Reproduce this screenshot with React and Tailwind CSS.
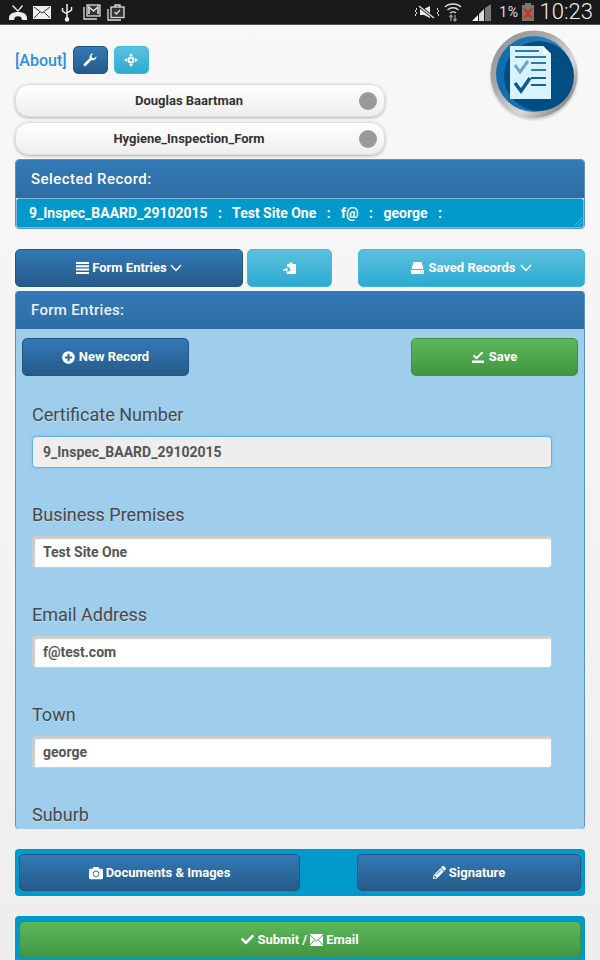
import { FaCamera, FaCheck, FaPencilAlt, FaPlusCircle } from 'react-icons/fa';

const blue = 'bg-gradient-to-b from-[#337ab7] to-[#265a88] border border-[#245580]';
const sky = 'bg-gradient-to-b from-[#5bc0de] to-[#2aabd2] border border-[#46b8da]';
const green = 'bg-gradient-to-b from-[#5cb85c] to-[#419641] border border-[#3e8f3e]';

function StatusBar() {
  return (
    <div className="h-[25px] bg-[#1a1a1a] border-b border-b-[#555] flex items-center justify-between pl-[8px] pr-[7px] shrink-0">
      <div className="flex items-center gap-[5px]">
        <svg width="20" height="18" viewBox="0 0 20 18" fill="#eee">
          <path d="M1 15c0-4 4-6 9-6s9 2 9 6v2h-5l-1-3c-2-1-4-1-6 0l-1 3H1z" />
          <path d="M5 2l5 5 4-5 1 1-5 6-6-6z" />
        </svg>
        <svg width="18" height="13" viewBox="0 0 18 13">
          <rect width="18" height="13" fill="#eee" />
          <path d="M1 1l8 6 8-6M1 12l6-6M17 12l-6-6" stroke="#333" fill="none" />
        </svg>
        <svg className="ml-[5px]" width="12" height="19" viewBox="0 0 12 19" fill="none" stroke="#eee" strokeWidth="1.5">
          <path d="M6 1v16M1.5 5v3l4.500 3M10.500 4v3l-4.500 3" />
          <circle cx="6" cy="16.500" r="1.500" fill="#eee" />
        </svg>
        <svg className="ml-[5px]" width="18" height="16" viewBox="0 0 18 16" fill="none" stroke="#ddd" strokeWidth="1.300">
          <path d="M1 3v12h13" />
          <rect x="4" y="1" width="13" height="11" fill="#333" />
          <path d="M6 10V3l4.500 4L15 3v7" strokeWidth="1.600" />
        </svg>
        <svg className="ml-[1px]" width="18" height="17" viewBox="0 0 18 17" fill="none" stroke="#ddd" strokeWidth="1.300">
          <path d="M1 5v11h13" />
          <rect x="4" y="3" width="13" height="10.500" fill="#333" />
          <path d="M8 3V1h5v2M7.500 8l2 2 3.500-4" />
        </svg>
      </div>
      <div className="flex items-center">
        <svg width="24" height="14" viewBox="0 0 24 14" fill="none" stroke="#ddd">
          <path d="M1 3q2 1 0 2t0 2 0 2 0 2M23 3q-2 1 0 2t0 2 0 2 0 2" />
          <path d="M5 4h4l6-3v12l-6-3H5z" fill="#eee" stroke="none" />
          <path d="M4 1l15 12" stroke="#1a1a1a" strokeWidth="3" />
          <path d="M4 1l15 12" strokeWidth="1.500" />
        </svg>
        <svg className="ml-[5px]" width="18" height="20" viewBox="0 0 18 20" fill="none" stroke="#ddd" strokeWidth="1.300">
          <path d="M1 5c4-4 12-4 16 0M3.500 8c3-3 8-3 11 0M6 11c2-1.500 4-1.500 6 0" />
          <path d="M7 13v6M5.500 15l1.500-2 1.500 2M11 19v-6M9.500 17l1.500 2 1.500-2" stroke="#999" />
        </svg>
        <svg className="ml-[10px]" width="20" height="17" viewBox="0 0 20 17">
          <path d="M0 17l6-6v6z" fill="#fff" />
          <path d="M7 10l5-5v12H7z" fill="#ddd" />
          <path d="M13 4l6-4v17h-6z" fill="#777" />
        </svg>
        <span className="ml-[7px] text-[14px] text-[#ddd] leading-none tracking-[0.6px]">1%</span>
        <svg className="ml-[3px] mt-[-1px]" width="12" height="18" viewBox="0 0 12 18">
          <path d="M3 0h6v2h3v16H0V2h3z" fill="#777" />
          <path d="M2.500 6l7 9M9.500 6l-7 9" stroke="#e02a10" strokeWidth="2.400" />
        </svg>
        <span className="ml-[6px] text-[22px] text-[#eee] font-light leading-none">10:23</span>
      </div>
    </div>
  );
}

function Toggle({ label }) {
  return (
    <div className="w-[370px] h-[33px] rounded-[14px] border border-[#ddd] bg-gradient-to-b from-white to-[#eee] shadow-[0_1px_3px_rgba(0,0,0,0.3)] flex items-center pr-[22px] relative">
      <span className="flex-1 text-center text-[13px] font-bold text-[#333]">{label}</span>
      <span className="absolute right-[7px] top-[7px] w-[18px] h-[18px] rounded-full bg-[#999]" />
    </div>
  );
}

function Logo() {
  return (
    <svg width="92" height="92" viewBox="0 0 92 92" className="shrink-0">
      <defs>
        <linearGradient id="ring" x1="0" y1="0" x2="1" y2="1">
          <stop offset="0" stopColor="#8f8f8f" />
          <stop offset="0.35" stopColor="#a8a8a8" />
          <stop offset="0.65" stopColor="#d8d8d8" />
          <stop offset="1" stopColor="#5a5a5a" />
        </linearGradient>
        <linearGradient id="face" x1="0" y1="0" x2="1" y2="0">
          <stop offset="0" stopColor="#0d6cab" />
          <stop offset="1" stopColor="#2c86bf" />
        </linearGradient>
        <radialGradient id="halo" cx="0.5" cy="0.5" r="0.5">
          <stop offset="0.85" stopColor="#000" stopOpacity="0.35" />
          <stop offset="1" stopColor="#000" stopOpacity="0" />
        </radialGradient>
      </defs>
      <circle cx="46" cy="47" r="45.500" fill="url(#halo)" />
      <circle cx="46" cy="45" r="43.500" fill="url(#ring)" />
      <circle cx="46" cy="45" r="38" fill="url(#face)" />
      <circle cx="51" cy="47" r="35" fill="#004d84" />
      <g transform="translate(-3 0)">
        <path d="M25 17h33l8 8v45H25z" fill="#d8f3fd" />
        <path d="M58 17l8 8h-8z" fill="#fff" />
        <path d="M30 21h24v2H30zM30 27h31v2H30z" fill="#2f7aa8" />
        <path d="M30 36l5 7 8-11" stroke="#6fa5c4" strokeWidth="3" fill="none" />
        <path d="M46 33h15v2H46zM46 40h15v2H46z" fill="#2f7aa8" />
        <path d="M46 48h15v2H46zM46 55h15v2H46z" fill="#14608f" />
        <path d="M30 54l6 8 9-13" stroke="#0a5a8e" strokeWidth="3.500" fill="none" />
      </g>
    </svg>
  );
}

function Field({ label, value, disabled }) {
  return (
    <div className="h-[100px]">
      <div className="h-[36px] pt-[3px] text-[18px] leading-[24px] text-[#484848] [text-shadow:0_1px_0_rgba(255,255,255,0.4)]">{label}</div>
      <div
        className={`w-[520px] h-[32px] rounded-[4px] flex items-center pl-[10px] text-[14px] font-bold text-[#555] ${
          disabled
            ? 'bg-[#eee] border border-[#66afe9] shadow-[0_0_3px_rgba(102,175,233,0.6)]'
            : 'bg-white border border-[#ccc] shadow-[inset_2px_2px_1px_rgba(0,0,0,0.2)]'
        }`}
      >
        {value}
      </div>
    </div>
  );
}

function Btn({ cls, className, children }) {
  return (
    <div className={`rounded-[5px] flex items-center justify-center text-white text-[13px] font-bold ${cls} ${className}`}>
      {children}
    </div>
  );
}

function Chevron() {
  return (
    <svg width="12" height="8" viewBox="0 0 12 8" fill="none" stroke="#fff" strokeWidth="1.500">
      <path d="M1 1l5 5.500L11 1" />
    </svg>
  );
}

export default function App() {
  return (
    <div className="w-[600px] h-[960px] overflow-hidden flex flex-col bg-gradient-to-b from-[#f8f8f8] to-[#eee] font-['Roboto',sans-serif]">
      <StatusBar />

      <div className="flex justify-between pl-[15px] pr-[20px] h-[134px] shrink-0">
        <div className="pt-[21px]">
          <div className="flex items-center h-[28px]">
            <span className="text-[#2b8fdc] text-[16px] font-medium mr-[6px] pt-[2px]">[About]</span>
            <Btn cls={blue} className="w-[35px] h-[28px] rounded-[4px]">
              <svg width="14" height="14" viewBox="0 0 14 14" fill="#fff">
                <path d="M13.500 3.200a3.800 3.800 0 01-5 3.900L3 12.800a1.400 1.400 0 01-2-2l5.600-5.500A3.800 3.800 0 0110.500.4L8.400 2.500l.5 2.300 2.300.5z" />
              </svg>
            </Btn>
            <Btn cls={sky} className="w-[35px] h-[28px] ml-[6px] rounded-[4px]">
              <svg width="14" height="14" viewBox="0 0 14 14" fill="#fff">
                <path d="M7 0l2 3H5zM7 14l-2-3h4zM0 7l3-2v4zM14 7l-3 2V5z" />
                <path d="M7 3.500a3.500 3.500 0 110 7 3.500 3.500 0 010-7zm0 2a1.500 1.500 0 100 3 1.500 1.500 0 000-3z" />
              </svg>
            </Btn>
          </div>
          <div className="mt-[10px] flex flex-col gap-[5px]">
            <Toggle label="Douglas Baartman" />
            <Toggle label="Hygiene_Inspection_Form" />
          </div>
        </div>
        <div className="pt-[4px]"><Logo /></div>
      </div>

      <div className="mx-[15px] h-[70px] rounded-[4px] border border-[#5b93c2] overflow-hidden flex flex-col shrink-0">
        <div className="h-[38px] bg-gradient-to-b from-[#337ab7] to-[#2e6da4] flex items-center pl-[15px] text-white text-[15px] font-medium tracking-[0.45px]">
          Selected Record:
        </div>
        <div className="flex-1 bg-[#0099cc] border border-[#7fb8d8] rounded-[3px] flex items-center pl-[12px] text-white text-[14px] font-bold whitespace-pre relative">
          {'9_Inspec_BAARD_29102015   :   Test Site One   :   f@   :   george   :'}
          <svg className="absolute right-[1px] bottom-[1px]" width="8" height="8" viewBox="0 0 8 8" stroke="#7fa8c0" fill="none">
            <path d="M8 0L0 8M8 4L4 8" />
          </svg>
        </div>
      </div>

      <div className="mx-[15px] mt-[20px] flex h-[38px] shrink-0">
        <Btn cls={blue} className="w-[228px] gap-[3px]">
          <svg width="13" height="12" viewBox="0 0 13 12" fill="#fff">
            <path d="M0 0h13v2H0zM0 3.300h13v2H0zM0 6.600h13v2H0zM0 10h13v2H0z" />
          </svg>
          Form Entries
          <Chevron />
        </Btn>
        <Btn cls={sky} className="w-[85px] ml-[4px]">
          <svg width="13" height="12" viewBox="0 0 13 12" fill="#fff">
            <path d="M4 2h2.500V.5h3V2H12a1 1 0 011 1v8a1 1 0 01-1 1H4.500a1 1 0 01-1-1V9.500H6L8 7.500l-2-2V5H4z" />
            <path d="M0 7h3V5.500L5.500 7.500 3 9.500V8.500H0z" />
          </svg>
        </Btn>
        <Btn cls={sky} className="w-[227px] ml-[26px] gap-[4px]">
          <svg width="13" height="12" viewBox="0 0 13 12" fill="#fff">
            <path d="M2.500 0h8L12.500 7h-12zM0 8h13v4H0z" />
            <path d="M9 10h1M11 10h1" stroke="#46b0d8" />
          </svg>
          Saved Records
          <Chevron />
        </Btn>
      </div>

      <div className="mx-[15px] mt-[4px] h-[538px] rounded-[4px] border-x border-[#5b93c2] overflow-hidden bg-[#9fcdec] shrink-0">
        <div className="h-[38px] bg-gradient-to-b from-[#337ab7] to-[#2e6da4] flex items-center pl-[15px] text-[#eef] text-[15px] font-medium tracking-[0.3px]">
          Form Entries:
        </div>
        <div className="flex justify-between pl-[6px] pr-[6px] pt-[9px]">
          <Btn cls={blue} className="w-[167px] h-[38px] gap-[4px]"><FaPlusCircle size={13} />New Record</Btn>
          <Btn cls={green} className="w-[167px] h-[38px] gap-[5px]">
            <svg width="12" height="12" viewBox="0 0 12 12" fill="#fff">
              <path d="M0 9.500h12V12H0zM2.200 3.500l2.300 2.200L9.800.5l1.500 1.500L4.500 8.500 0.800 5z" />
            </svg>
            Save
          </Btn>
        </div>
        <div className="pl-[16px] pt-[24px]">
          <Field label="Certificate Number" value="9_Inspec_BAARD_29102015" disabled />
          <Field label="Business Premises" value="Test Site One" />
          <Field label="Email Address" value="f@test.com" />
          <Field label="Town" value="george" />
          <Field label="Suburb" />
        </div>
      </div>

      <div className="mx-[15px] mt-[20px] h-[47px] rounded-[4px] bg-[#0099cc] flex justify-between items-center px-[4px] shrink-0">
        <Btn cls={blue} className="w-[281px] h-[37px] gap-[3px]"><FaCamera size={14} />Documents & Images</Btn>
        <Btn cls={blue} className="w-[224px] h-[37px] gap-[3px]"><FaPencilAlt size={13} />Signature</Btn>
      </div>

      <div className="mx-[15px] mt-[20px] h-[47px] rounded-[4px] bg-[#0099cc] flex items-center px-[4px] shrink-0">
        <Btn cls={green} className="w-full h-[37px] gap-[3px]">
          <FaCheck size={13} />Submit /
          <svg width="13" height="12" viewBox="0 0 13 12">
            <rect width="13" height="12" fill="#fff" />
            <path d="M0 1l6.500 6L13 1M0 11l4.500-5M13 11L8.500 6" stroke="#4ca84c" fill="none" />
          </svg>
          Email
        </Btn>
      </div>
    </div>
  );
}
